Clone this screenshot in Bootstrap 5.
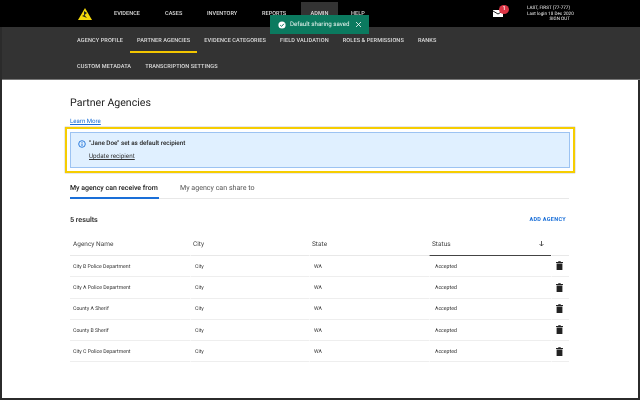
<!DOCTYPE html>
<html lang="en"><head><meta charset="utf-8"><title>Partner Agencies</title>
<link href="https://cdn.jsdelivr.net/npm/bootstrap@5.3.0/dist/css/bootstrap.min.css" rel="stylesheet">
<style>
html,body{width:640px;height:400px;overflow:hidden;background:#2b2b2b;font-family:Roboto,"Liberation Sans",sans-serif;color:#222;text-rendering:geometricPrecision}
.frame{height:398px;width:638px;position:relative;display:flex;flex-direction:column;will-change:transform}
.topbar{height:27px;background:#000;padding-left:78px;color:#ddd;font-size:5.6px;font-weight:500;width:640px}
.topbar a,.subbar a{color:#ddd;text-decoration:none;display:flex;align-items:center}
.tp-link{height:100%;padding-top:1px}
.t1{margin-left:22px;width:26px}.t2{margin-left:25px;width:17px}.t3{margin-left:25px;width:30px}.t4{margin-left:25px;width:24px}
.t5{margin-left:15px;width:37px;justify-content:center;background:#333;margin-top:2px;height:25px}.t6{margin-left:13px;width:14px}
.msgicon{position:relative;margin-left:128px;width:14px;height:10px;margin-top:10px}
.notif{position:absolute;left:6px;top:-5px;width:10px;height:9px;border-radius:50%;background:#dc3545;color:#fff;font-size:5.5px;line-height:9px;text-align:center}
.who{margin-left:20px;width:43px;text-align:right;font-size:4.6px;font-weight:400;line-height:5.6px;color:#eee;padding-top:6px;white-space:nowrap}
.subbar{height:53px;background:#333;margin-left:2px;width:638px;padding-left:68px;font-size:5.6px;font-weight:500;letter-spacing:.08px;border-bottom:1px solid #777}
.subrow{height:26px}
.subrow a{padding:2px 7px 0;height:26px;white-space:nowrap;position:relative}
.subrow a.on::after{content:"";position:absolute;left:0;right:0;bottom:0;height:2px;background:#f2c500}
.pagebody{flex:1;background:#fff;margin-left:2px;padding:16px 70px 0 68px;min-height:0}
.pagebody h1{font-size:10.6px;font-weight:400;color:#222;margin:0;line-height:13px}
.learn{font-size:6.1px;color:#1a6fd8;display:block;margin-top:9px;line-height:8px}
.hl{margin:1px 0 0 -5px;width:510px;height:46px;border:2px solid #f6cd00;padding:3px;box-shadow:0 0 1px #777}
.infobox{height:100%;background:#e0f0ff;border:1px solid #9cc3f2;padding:6px 7px 0;font-size:6.3px;font-weight:500;color:#222}
.infobox a{color:#333;font-weight:400;display:block;margin:4px 0 0 11px;line-height:8px}
.infotext{line-height:9px;gap:3px}
.tabs{margin-top:9px;border-bottom:1px solid #e8e8e8;height:17px;font-size:7.1px;width:499px;white-space:nowrap}
.tabitem{height:17px;color:#555;line-height:10px;padding-top:1px}
.tabitem.act{color:#222;font-weight:500;font-size:7px;border-bottom:2px solid #1a6fd8;width:89px}
.tabitem.oth{margin-left:21px}
.resrow{margin-top:16px;font-size:7.2px;font-weight:500;width:499px;height:10px;line-height:10px}
.addbtn{font-size:5.5px;font-weight:700;color:#1a6fd8;letter-spacing:.3px;margin-right:3px}
.agtable{width:499px;margin-top:9px;table-layout:fixed;border-collapse:separate;border-spacing:0;font-size:5.2px;color:#333}
.agtable th{font-size:6.5px;font-weight:400;height:22px;padding:0 0 0 3px;border-bottom:1px solid #e8e8e8;color:#444;vertical-align:middle}
.agtable td{height:21.3px;padding:3px 0 0 3px;border-bottom:1px solid #eee;vertical-align:middle}
.agtable td+td,.agtable th+th{border-left:1px solid #fff}
.agtable th+th{padding-left:2px}
.agtable th.stat{border-bottom:1.5px solid #444}
.agtable td.cel{padding-left:4px}
.agtable td.accp{padding-left:5px}
.statbox{display:flex;justify-content:space-between;padding-right:6px}
.agtable td.icoc{text-align:center;padding:0 2px 0 0}
.toast-mini{position:absolute;left:270px;top:15px;width:99px;height:19px;background:#0b7a5f;color:#e8f5f0;font-size:6.2px;display:flex;align-items:center;padding-left:8px;gap:4px;white-space:nowrap}
.toast-x{margin-left:1px}
</style></head><body>
<div class="frame">
 <div class="topbar d-flex">
  <svg width="14" height="13" viewBox="0 0 14 13" class="mt-2"><path d="M7 0 14 12 0 12Z" fill="#f5d90a"/><path d="M6 3 9 5 6.5 7 9 10 4 8 6 7Z" fill="#222"/></svg>
  <a class="tp-link t1" href="#">EVIDENCE</a><a class="tp-link t2" href="#">CASES</a><a class="tp-link t3" href="#">INVENTORY</a><a class="tp-link t4" href="#">REPORTS</a><a class="t5" href="#">ADMIN</a><a class="tp-link t6" href="#">HELP</a>
  <div class="msgicon"><svg width="10" height="7" viewBox="0 0 10 7"><rect width="10" height="7" fill="#fff"/><path d="M0 1 5 4 10 1" fill="none" stroke="#222" stroke-width="1"/></svg><span class="notif">1</span></div>
  <div class="who"><div>LAST, FIRST (77-777)</div><div>Last login 18 Dec 2020</div><div>SIGN OUT</div></div>
 </div>
 <div class="subbar">
  <div class="subrow d-flex"><a href="#">AGENCY PROFILE</a><a class="on" href="#">PARTNER AGENCIES</a><a href="#">EVIDENCE CATEGORIES</a><a href="#">FIELD VALIDATION</a><a href="#">ROLES &amp; PERMISSIONS</a><a href="#">RANKS</a></div>
  <div class="subrow d-flex"><a href="#">CUSTOM METADATA</a><a href="#">TRANSCRIPTION SETTINGS</a></div>
 </div>
 <div class="pagebody">
  <h1>Partner Agencies</h1>
  <a class="learn" href="#">Learn More</a>
  <div class="hl"><div class="infobox">
   <div class="d-flex align-items-center infotext"><svg width="8" height="8" viewBox="0 0 8 8"><circle cx="4" cy="4" r="3.3" fill="none" stroke="#1a6fd8" stroke-width=".9"/><path d="M4 3.5V6M4 2V2.8" stroke="#1a6fd8" stroke-width=".9"/></svg><span>"Jane Doe" set as default recipient</span></div>
   <a href="#">Update recipient</a>
  </div></div>
  <div class="tabs d-flex"><div class="tabitem act">My agency can receive from</div><div class="tabitem oth">My agency can share to</div></div>
  <div class="resrow d-flex justify-content-between"><span>5 results</span><span class="addbtn">ADD AGENCY</span></div>
  <table class="agtable">
   <colgroup><col style="width:120px"><col style="width:119px"><col style="width:120px"><col style="width:122px"><col style="width:18px"></colgroup>
   <thead><tr><th>Agency Name</th><th>City</th><th>State</th><th class="stat"><div class="statbox"><span>Status</span><svg width="7" height="7" viewBox="0 0 7 7"><path d="M3.5 1V6M1.5 4 3.5 6 5.5 4" fill="none" stroke="#333" stroke-width=".8"/></svg></div></th><th></th></tr></thead>
   <tbody>
    <tr><td>City B Police Department</td><td class="cel">City</td><td class="cel">WA</td><td class="accp">Accepted</td><td class="icoc"><svg width="7" height="9" viewBox="0 0 7 9"><path d="M0 1H2L2.5 .3H4.5L5 1H7V2H0ZM.6 2.5H6.4V9H.6Z" fill="#222"/></svg></td></tr>
    <tr><td>City A Police Department</td><td class="cel">City</td><td class="cel">WA</td><td class="accp">Accepted</td><td class="icoc"><svg width="7" height="9" viewBox="0 0 7 9"><path d="M0 1H2L2.5 .3H4.5L5 1H7V2H0ZM.6 2.5H6.4V9H.6Z" fill="#222"/></svg></td></tr>
    <tr><td>County A Sherif</td><td class="cel">City</td><td class="cel">WA</td><td class="accp">Accepted</td><td class="icoc"><svg width="7" height="9" viewBox="0 0 7 9"><path d="M0 1H2L2.5 .3H4.5L5 1H7V2H0ZM.6 2.5H6.4V9H.6Z" fill="#222"/></svg></td></tr>
    <tr><td>County B Sherif</td><td class="cel">City</td><td class="cel">WA</td><td class="accp">Accepted</td><td class="icoc"><svg width="7" height="9" viewBox="0 0 7 9"><path d="M0 1H2L2.5 .3H4.5L5 1H7V2H0ZM.6 2.5H6.4V9H.6Z" fill="#222"/></svg></td></tr>
    <tr><td>City C Police Department</td><td class="cel">City</td><td class="cel">WA</td><td class="accp">Accepted</td><td class="icoc"><svg width="7" height="9" viewBox="0 0 7 9"><path d="M0 1H2L2.5 .3H4.5L5 1H7V2H0ZM.6 2.5H6.4V9H.6Z" fill="#222"/></svg></td></tr>
   </tbody>
  </table>
 </div>
 <div class="toast-mini"><svg width="8" height="8" viewBox="0 0 8 8"><circle cx="4" cy="4" r="3.6" fill="#fff"/><path d="M2.2 4.1 3.5 5.4 5.9 2.8" fill="none" stroke="#0b7a5f" stroke-width="1"/></svg><span>Default sharing saved</span><svg class="toast-x" width="7" height="7" viewBox="0 0 7 7"><path d="M1 1 6 6M6 1 1 6" stroke="#fff" stroke-width=".8"/></svg></div>
</div>
<script src="https://cdn.jsdelivr.net/npm/bootstrap@5.3.0/dist/js/bootstrap.bundle.min.js"></script>
</body></html>
